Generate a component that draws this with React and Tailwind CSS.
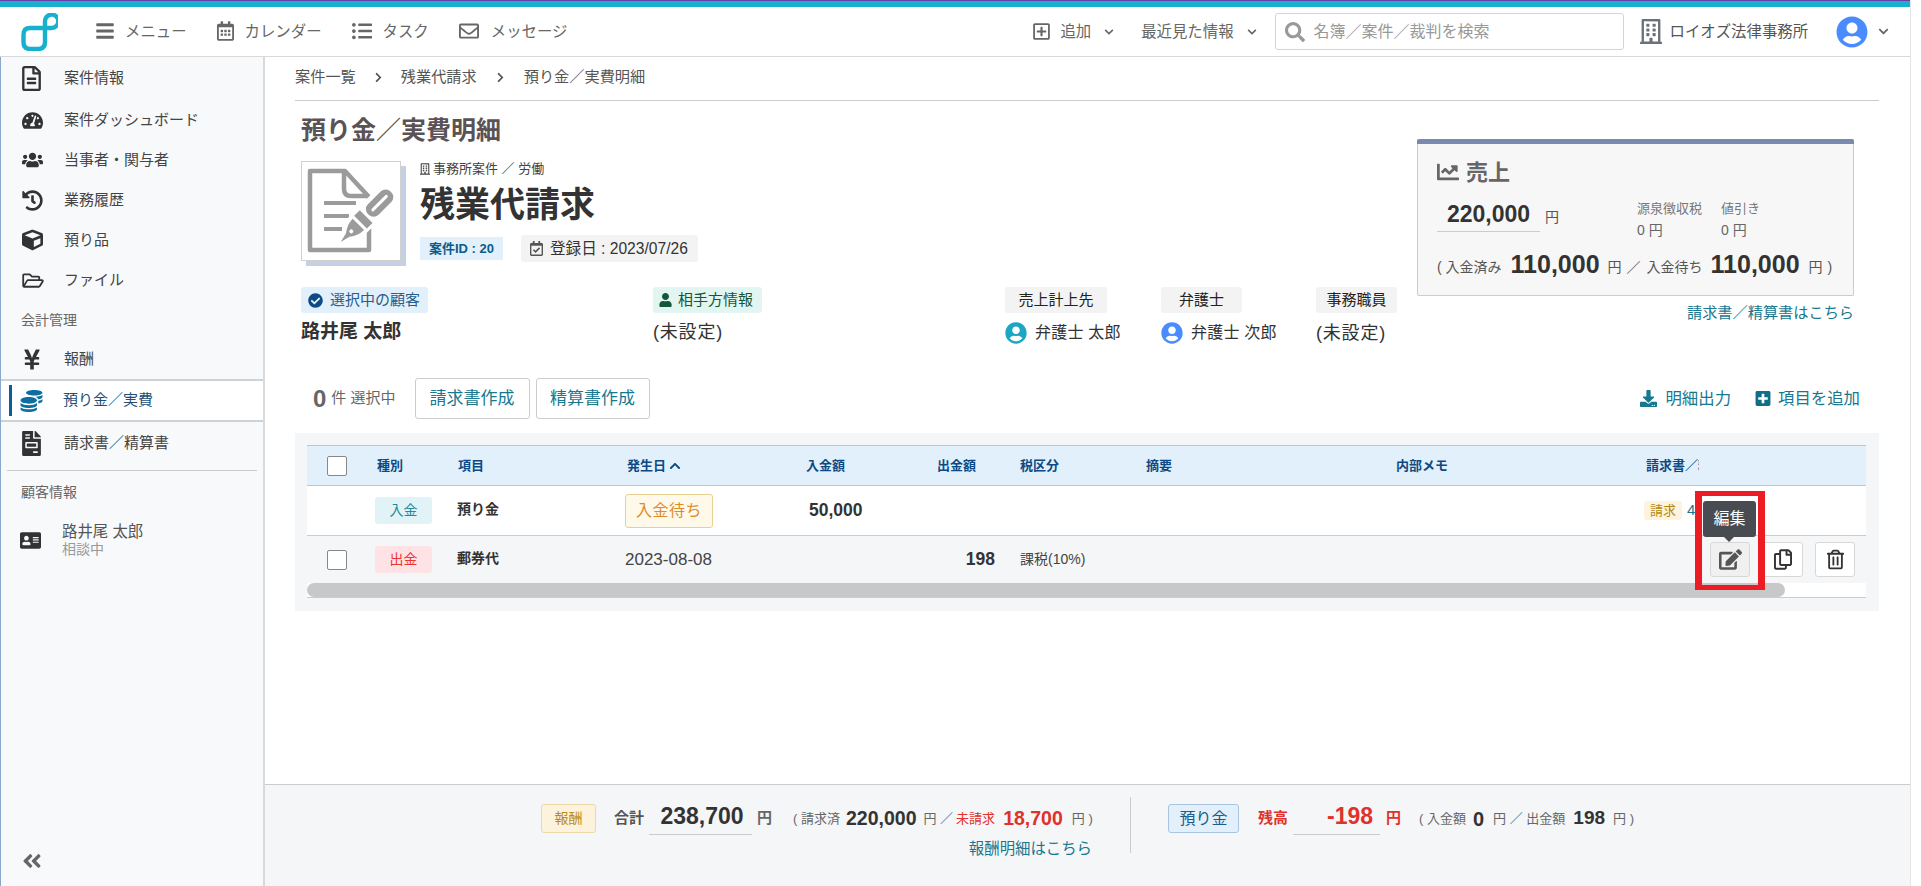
import React from "react";
import {
  FaBars, FaRegCalendarAlt, FaListUl, FaRegEnvelope, FaRegPlusSquare, FaChevronDown, FaChevronRight, FaChevronUp, FaSearch, FaRegBuilding,
  FaUserCircle, FaRegFileAlt, FaTachometerAlt, FaUsers, FaHistory, FaCube, FaRegFolderOpen, FaYenSign, FaCoins, FaFileInvoice,
  FaAddressCard, FaAngleDoubleLeft, FaChartLine, FaCheckCircle, FaUser, FaDownload, FaPlusSquare, FaEdit, FaRegCopy, FaRegTrashAlt, FaRegCalendarCheck,
} from "react-icons/fa";

function Logo() {
  return (
    <svg width="37" height="38" viewBox="0 0 37 38" fill="none" className="shrink-0">
      <path d="M24 15 H9 Q2.5 15 2.5 22 V29 Q2.5 36 9 36 H17 Q24 36 24 29 V9 A6.7 6.7 0 1 1 30.5 15 H24" stroke="#17b0cd" strokeWidth="4.4" />
    </svg>
  );
}

function CaseIcon() {
  const g = "#9b9b9b";
  return (
    <svg width="98" height="98" viewBox="0 0 98 98" fill="none">
      <path d="M8 9 H43 L67 35 V88 H8 Z" stroke={g} strokeWidth="4.5" strokeLinejoin="round" />
      <path d="M42 9 V27 Q42 34 49 34 H67" stroke={g} strokeWidth="4.5" />
      <path d="M22 41 H54 M22 54 H47 M22 67 H40" stroke={g} strokeWidth="4" />
      <g transform="translate(38.7 80) rotate(-45)">
        <path d="M2 -3 L10 -5 Q18 -10 25 -10 L72 -10 Q78 0 72 10 L25 10 Q18 10 10 5 L2 3 Z" fill="#fff" stroke="#fff" strokeWidth="4" />
        <path d="M0 0 L10 -2.5 Q17 -8 25 -8 L25 8 Q17 8 10 2.5 Z" fill={g} />
        <circle cx="15" cy="0" r="2" fill="#fff" />
        <rect x="28" y="-9" width="8" height="18" fill={g} />
        <rect x="39" y="-7.5" width="32" height="15" rx="7" fill={g} />
        <rect x="44" y="-1.5" width="22" height="3" rx="1.5" fill="#fff" />
      </g>
    </svg>
  );
}

function TopItem({ icon, label, className }) {
  return (
    <div className={"flex items-center text-[15.4px] text-[#666] shrink-0 " + className}>
      {icon}
      <span>{label}</span>
    </div>
  );
}

function SideItem({ icon, label, className = "h-[40px]" }) {
  return (
    <div className={"flex items-center pl-[21px] text-[15px] text-[#444] " + className}>
      <span className="w-[42px] shrink-0 flex items-center">{icon}</span>
      <span>{label}</span>
    </div>
  );
}

function PersonHead({ children, className }) {
  return <div className={"h-[26px] rounded-[3px] flex items-center text-[15px] " + className}>{children}</div>;
}

const teal = "text-[#17788f]";
const GRID = "grid grid-cols-[70px_81px_169px_179px_131px_83px_126px_250px_250px_1fr]";
const slot = "h-[29px] flex items-center shrink-0 ";

function Head({ children, className = "" }) {
  return <div className={"text-[13px] font-bold text-[#0d4a85] flex items-center " + className}>{children}</div>;
}

function ActionBtn({ children, className = "bg-white" }) {
  return <div className={"w-[40px] h-[35px] rounded-[3px] border border-[#d8d8d8] flex items-center justify-center text-[#333] " + className}>{children}</div>;
}

export default function App() {
  return (
    <div className="w-[1921px] h-[886px] overflow-hidden flex bg-white text-[#333] font-['Liberation_Sans','Noto_Sans_CJK_JP',sans-serif]">
      <div className="w-[1910px] h-full flex flex-col shrink-0">
        <div className="h-[1px] bg-[#6a3fa8]" />
        <div className="h-[6px] bg-[#17b0cd]" />
        <header className="h-[50px] border-b border-[#d9d9d9] flex items-center pl-[21px] shrink-0">
          <Logo />
          <TopItem className="ml-[38px]" label="メニュー" icon={<FaBars className="w-[18px] h-[20px] mr-[11px] text-[#666]" />} />
          <TopItem className="ml-[30px]" label="カレンダー" icon={<FaRegCalendarAlt className="w-[17px] h-[20px] mr-[11px] text-[#666]" />} />
          <TopItem className="ml-[30px]" label="タスク" icon={<FaListUl className="w-[20px] h-[20px] mr-[11px] text-[#666]" />} />
          <TopItem className="ml-[30px]" label="メッセージ" icon={<FaRegEnvelope className="w-[20px] h-[20px] mr-[12px] text-[#666]" />} />
          <TopItem className="ml-[466px]" label="追加" icon={<FaRegPlusSquare className="w-[17px] h-[19px] mr-[10px] text-[#666]" />} />
          <FaChevronDown className="w-[10px] h-[10px] ml-[13px] text-[#666] shrink-0" />
          <TopItem className="ml-[27px]" label="最近見た情報" icon={null} />
          <FaChevronDown className="w-[10px] h-[10px] ml-[13px] text-[#666] shrink-0" />
          <div className="ml-[18px] w-[349px] h-[37px] border border-[#d5d5d5] rounded-[3px] flex items-center pl-[9px] text-[16px] text-[#999] shrink-0">
            <FaSearch className="w-[20px] h-[20px] mr-[9px] text-[#999]" />
            <span>名簿／案件／裁判を検索</span>
          </div>
          <FaRegBuilding className="w-[22px] h-[25px] ml-[16px] text-[#6b7178] shrink-0" />
          <span className="ml-[8px] text-[15.4px] text-[#555] shrink-0">ロイオズ法律事務所</span>
          <FaUserCircle className="w-[32px] h-[32px] ml-[28px] text-[#4a8cff] shrink-0" />
          <FaChevronDown className="w-[11px] h-[11px] ml-[10px] text-[#666] shrink-0" />
        </header>
        <div className="flex-1 flex min-h-0">
          <aside className="w-[265px] shrink-0 border-l border-[#8aa8cc] border-r-2 border-r-[#d9d9d9] bg-[#f8f9fb] flex flex-col pt-[1px]">
            <SideItem label="案件情報" icon={<FaRegFileAlt className="w-[19px] h-[25px] text-[#333]" />} />
            <SideItem className="h-[40px] mt-[2px]" label="案件ダッシュボード" icon={<FaTachometerAlt className="w-[21px] h-[19px] text-[#333]" />} />
            <SideItem label="当事者・関与者" icon={<FaUsers className="w-[21px] h-[18px] text-[#333]" />} />
            <SideItem label="業務履歴" icon={<FaHistory className="w-[21px] h-[21px] text-[#333]" />} />
            <SideItem label="預り品" icon={<FaCube className="w-[21px] h-[22px] text-[#333]" />} />
            <SideItem label="ファイル" icon={<FaRegFolderOpen className="w-[22px] h-[19px] text-[#333]" />} />
            <div className="h-[40px] flex items-center pl-[20px] text-[14px] text-[#666]">会計管理</div>
            <SideItem className="h-[39px]" label="報酬" icon={<FaYenSign className="w-[20px] h-[23px] text-[#333]" />} />
            <div className="relative h-[43px] bg-white border-y-2 border-[#ccd3d8] flex items-center pl-[19px] text-[15px] text-[#234f73]">
              <div className="absolute left-[8px] top-[4px] w-[3px] h-[31px] bg-[#0a5f96]" />
              <span className="w-[43px] shrink-0"><FaCoins className="w-[23px] h-[22px] text-[#0d6ea0]" /></span>
              <span>預り金／実費</span>
            </div>
            <SideItem className="h-[42px]" label="請求書／精算書" icon={<FaFileInvoice className="w-[19px] h-[25px] text-[#333]" />} />
            <div className="mt-[6px] ml-[6px] w-[250px] h-[1px] bg-[#ccc] shrink-0" />
            <div className="h-[42px] flex items-center pl-[20px] text-[14px] text-[#666]">顧客情報</div>
            <div className="h-[54px] flex items-center pl-[19px]">
              <span className="w-[42px] shrink-0"><FaAddressCard className="w-[21px] h-[21px] text-[#333]" /></span>
              <div className="flex flex-col">
                <span className="text-[15.4px] leading-[18px] text-[#555]">路井尾 太郎</span>
                <span className="text-[14px] leading-[16px] text-[#999]">相談中</span>
              </div>
            </div>
            <div className="mt-auto pl-[20px] pb-[14px]">
              <FaAngleDoubleLeft className="w-[22px] h-[22px] text-[#666]" />
            </div>
          </aside>
          <div className="flex-1 flex flex-col min-w-0">
            <main className="flex-1 min-h-0 overflow-hidden pl-[30px] pr-[31px]">
              <nav className="h-[44px] border-b border-[#ccc] flex items-center pb-[3px] text-[15.2px] text-[#555]">
                <span>案件一覧</span>
                <FaChevronRight className="w-[9px] h-[11px] mx-[18px] text-[#555]" />
                <span>残業代請求</span>
                <FaChevronRight className="w-[9px] h-[11px] mx-[19px] text-[#555]" />
                <span>預り金／実費明細</span>
              </nav>
              <div className="flex justify-between">
                <div className="ml-[6px] w-[1115px] shrink-0">
                  <h1 className="pt-[14px] h-[44px] text-[25px] leading-[30px] font-bold text-[#5a5255]">預り金／実費明細</h1>
                  <div className="mt-[16px] flex">
                    <div className="w-[100px] h-[100px] border border-[#d0d0d0] bg-white shadow-[5px_5px_0_#c5d0e2] shrink-0">
                      <CaseIcon />
                    </div>
                    <div className="ml-[19px]">
                      <div className="h-[16px] flex items-center text-[13px] text-[#444]">
                        <FaRegBuilding className="w-[10px] h-[12px] mr-[3px] text-[#444]" />
                        <span>事務所案件 ／ 労働</span>
                      </div>
                      <div className="mt-[8px] h-[40px] flex items-center text-[35px] font-bold text-[#333]">残業代請求</div>
                      <div className="mt-[10px] flex items-center">
                        <span className="h-[23px] w-[83px] bg-[#e1f0fb] text-[#0a5c8a] text-[13px] font-bold flex items-center justify-center">案件ID : 20</span>
                        <span className="ml-[18px] h-[27px] w-[177px] bg-[#f3f3f3] rounded-[3px] flex items-center pl-[9px] text-[15.6px] text-[#333] whitespace-nowrap">
                          <FaRegCalendarCheck className="w-[13px] h-[15px] mr-[7px] text-[#555]" />
                          登録日 : 2023/07/26
                        </span>
                      </div>
                    </div>
                  </div>
                  <div className="mt-[25px] flex">
                    <div className="w-[352px] shrink-0">
                      <PersonHead className="w-[127px] bg-[#e1f0fb] text-[#2b5c8a] pl-[7px]"><FaCheckCircle className="w-[15px] h-[15px] mr-[7px] text-[#0d4a85]" />選択中の顧客</PersonHead>
                      <div className="h-[38px] flex items-center text-[19px] font-bold text-[#333]">路井尾 太郎</div>
                    </div>
                    <div className="w-[352px] shrink-0">
                      <PersonHead className="w-[109px] bg-[#e3f5f0] text-[#14573c] pl-[6px]"><FaUser className="w-[13px] h-[14px] mr-[6px] text-[#14573c]" />相手方情報</PersonHead>
                      <div className="h-[38px] flex items-center text-[18px] tracking-[0.8px] text-[#333]">(未設定)</div>
                    </div>
                    <div className="w-[156px] shrink-0">
                      <PersonHead className="w-[102px] bg-[#f3f3f3] text-[#222] justify-center">売上計上先</PersonHead>
                      <div className="h-[38px] pt-[2px] flex items-center text-[16px] tracking-[0.2px] text-[#333] whitespace-nowrap"><FaUserCircle className="w-[22px] h-[22px] mr-[8px] text-[#1aa7c4]" />弁護士 太郎</div>
                    </div>
                    <div className="w-[155px] shrink-0">
                      <PersonHead className="w-[81px] bg-[#f3f3f3] text-[#222] justify-center">弁護士</PersonHead>
                      <div className="h-[38px] pt-[2px] flex items-center text-[16px] tracking-[0.2px] text-[#333] whitespace-nowrap"><FaUserCircle className="w-[22px] h-[22px] mr-[8px] text-[#4a8cff]" />弁護士 次郎</div>
                    </div>
                    <div className="shrink-0">
                      <PersonHead className="w-[81px] bg-[#f3f3f3] text-[#222] justify-center">事務職員</PersonHead>
                      <div className="h-[38px] pt-[3px] flex items-center text-[18px] tracking-[0.8px] text-[#333]">(未設定)</div>
                    </div>
                  </div>
                </div>
                <div className="mt-[38px] mr-[25px] w-[437px] shrink-0">
                  <div className="h-[157px] border border-[#ccc] border-t-0 rounded-[2px] bg-[#f7f7f7]">
                    <div className="h-[5px] bg-[#7a8aae] -mx-[1px] rounded-t-[2px]" />
                    <div className="pl-[19px]">
                      <div className="mt-[16px] h-[24px] flex items-center text-[22px] font-semibold text-[#666]">
                        <FaChartLine className="w-[22px] h-[22px] mr-[7px] text-[#666]" />売上
                      </div>
                      <div className="mt-[13px] flex h-[43px]">
                        <div className="w-[200px] flex shrink-0">
                          <div className="w-[103px] h-[35px] border-b border-[#ccc] flex items-center justify-center text-[23px] font-bold text-[#333]">220,000</div>
                          <span className="ml-[5px] mt-[10px] text-[14px] text-[#555]">円</span>
                        </div>
                        <div className="w-[84px] text-[13px] text-[#777] shrink-0">
                          <div className="h-[23px] flex items-center">源泉徴収税</div>
                          <div className="h-[20px] flex items-center text-[14px] text-[#666]">0 円</div>
                        </div>
                        <div className="text-[13px] text-[#777]">
                          <div className="h-[23px] flex items-center">値引き</div>
                          <div className="h-[20px] flex items-center text-[14px] text-[#666]">0 円</div>
                        </div>
                      </div>
                      <div className="mt-[10px] h-[34px] flex items-center text-[14px] text-[#555] whitespace-nowrap">
                        <span>( 入金済み</span>
                        <span className="ml-[9px] text-[25px] font-bold text-[#333] relative -top-[2px]">110,000</span>
                        <span className="ml-[8px]">円</span>
                        <span className="ml-[5px]">／</span>
                        <span className="ml-[6px]">入金待ち</span>
                        <span className="ml-[8px] text-[25px] font-bold text-[#333] relative -top-[2px]">110,000</span>
                        <span className="ml-[9px]">円</span>
                        <span className="ml-[5px]">)</span>
                      </div>
                    </div>
                  </div>
                  <div className={"mt-[6px] h-[20px] text-right text-[15.2px] " + teal}>請求書／精算書はこちら</div>
                </div>
              </div>
              <div className="mt-[27px] h-[41px] flex items-center pl-[18px] pr-[19px]">
                <span className="text-[24px] font-bold text-[#666]">0</span>
                <span className="ml-[5px] text-[15px] text-[#666]">件 選択中</span>
                <div className={"ml-[19px] w-[115px] h-[41px] border border-[#ccc] rounded-[3px] flex items-center justify-center text-[17px] " + teal}>請求書作成</div>
                <div className={"ml-[6px] w-[114px] h-[41px] border border-[#ccc] rounded-[3px] flex items-center justify-center text-[17px] " + teal}>精算書作成</div>
                <div className={"ml-auto flex items-center text-[16.4px] " + teal}>
                  <FaDownload className="w-[17px] h-[17px] mr-[8px]" />明細出力
                  <FaPlusSquare className="w-[16px] h-[17px] ml-[24px] mr-[7px] text-[#0f6f88]" />項目を追加
                </div>
              </div>
              <div className="mt-[14px] bg-[#f5f6f8] pt-[12px] pb-[13px] pl-[12px] pr-[13px]">
                <div className="relative">
                  <div className={GRID + " h-[41px] bg-[#e1f0fb] border-y border-[#c0c5cc]"}>
                    <div className="flex items-center pl-[20px]"><div className="w-[20px] h-[20px] bg-white border border-[#888] rounded-[2px]" /></div>
                    <Head>種別</Head>
                    <Head>項目</Head>
                    <Head>発生日<FaChevronUp className="w-[12px] h-[12px] ml-[3px]" /></Head>
                    <Head>入金額</Head>
                    <Head>出金額</Head>
                    <Head>税区分</Head>
                    <Head>摘要</Head>
                    <Head>内部メモ</Head>
                    <Head><span className="w-[53px] overflow-hidden whitespace-nowrap">請求書／精算書</span></Head>
                  </div>
                  <div className={GRID + " h-[50px] bg-white border-b border-[#ccc]"}>
                    <div />
                    <div className="flex items-center -ml-[2px]"><span className="w-[57px] h-[27px] rounded-[3px] bg-[#e1f3f6] text-[#1d8c9c] text-[14px] flex items-center justify-center">入金</span></div>
                    <div className="flex items-center -ml-[1px] pb-[2px] text-[14px] font-bold text-[#333]">預り金</div>
                    <div className="flex items-center -ml-[2px]"><span className="w-[88px] h-[34px] rounded-[3px] border border-[#e8d090] bg-[#fff9ea] text-[#e08a2a] text-[16px] tracking-[0.5px] flex items-center justify-center">入金待ち</span></div>
                    <div className="flex items-center pl-[3px] text-[17.5px] font-bold text-[#333]">50,000</div>
                    <div />
                    <div />
                    <div />
                    <div />
                    <div className="flex items-center -ml-[2px]">
                      <span className="w-[38px] h-[19px] rounded-[3px] bg-[#fdf3df] text-[#b08a10] text-[13px] flex items-center justify-center">請求</span>
                      <span className={"ml-[5px] text-[15px] " + teal}>4</span>
                    </div>
                  </div>
                  <div className={GRID + " h-[47px] bg-[#f5f6f8]"}>
                    <div className="flex items-center pl-[20px]"><div className="w-[20px] h-[20px] bg-white border border-[#888] rounded-[2px]" /></div>
                    <div className="flex items-center -ml-[2px]"><span className="w-[57px] h-[27px] rounded-[3px] bg-[#fde3e6] text-[#e33] text-[14px] flex items-center justify-center">出金</span></div>
                    <div className="flex items-center -ml-[1px] pb-[2px] text-[14px] font-bold text-[#333]">郵券代</div>
                    <div className="flex items-center -ml-[2px] text-[17px] text-[#444]">2023-08-08</div>
                    <div />
                    <div className="flex items-center justify-end pr-[25px] text-[17.5px] font-bold text-[#333]">198</div>
                    <div className="flex items-center text-[14px] text-[#444]">課税(10%)</div>
                    <div />
                    <div />
                    <div className="flex items-center justify-end pr-[11px] gap-[12.5px]">
                      <ActionBtn className="bg-[#f0f0f0]"><FaEdit className="w-[23px] h-[21px] text-[#555]" /></ActionBtn>
                      <ActionBtn><FaRegCopy className="w-[18px] h-[21px]" /></ActionBtn>
                      <ActionBtn><FaRegTrashAlt className="w-[17px] h-[21px]" /></ActionBtn>
                    </div>
                  </div>
                  <div className="h-[15px] bg-white border-b border-[#ccc]">
                    <div className="w-[1478px] h-[14px] rounded-full bg-[#c8c8c8]" />
                  </div>
                  <div className="absolute left-[1388px] top-[46px] w-[70px] h-[99px] border-x-[7px] border-y-[5px] border-[#ed1c24] pointer-events-none" />
                  <div className="absolute left-[1396px] top-[56px] w-[53px] h-[36px] rounded-[3px] bg-[#484b52] text-white text-[16px] flex items-center justify-center">
                    編集
                    <div className="absolute left-[21px] top-[36px] w-0 h-0 border-x-[5px] border-x-transparent border-t-[5px] border-t-[#484b52]" />
                  </div>
                </div>
              </div>
            </main>
            <footer className="h-[102px] shrink-0 border-t border-[#ccc] bg-[#f5f6f8] flex items-start pl-[276px]">
              <div className="w-[551px] shrink-0 pt-[19px]">
                <div className="h-[31px] flex whitespace-nowrap items-start">
                  <span className="w-[55px] h-[29px] rounded-[3px] bg-[#fdf2dc] border border-[#ecd9a8] text-[#b88a1a] text-[14px] flex items-center justify-center shrink-0">報酬</span>
                  <span className={"ml-[18px] text-[15px] font-bold text-[#555] " + slot}>合計</span>
                  <span className="ml-[5px] w-[103px] h-[31px] border-b border-[#ccc] flex items-center justify-center pl-[3px] text-[23px] font-bold text-[#333] pb-[5px] shrink-0">238,700</span>
                  <span className={"ml-[5px] text-[15px] font-bold text-[#666] " + slot}>円</span>
                  <span className={"ml-[21px] text-[13px] text-[#666] " + slot}>( 請求済</span>
                  <span className={"ml-[6px] text-[19.5px] font-bold text-[#333] " + slot}>220,000</span>
                  <span className={"ml-[7px] text-[13px] text-[#666] " + slot}>円 ／</span>
                  <span className={"ml-[3px] text-[13px] text-[#e0312b] " + slot}>未請求</span>
                  <span className={"ml-[8px] text-[19.5px] font-bold text-[#e0312b] " + slot}>18,700</span>
                  <span className={"ml-[9px] text-[13px] text-[#666] " + slot}>円&nbsp;)</span>
                </div>
                <div className={"mt-[2px] h-[20px] text-right text-[15.4px] " + teal}>報酬明細はこちら</div>
              </div>
              <div className="ml-[38px] mt-[12px] w-[1px] h-[56px] bg-[#ccc] shrink-0" />
              <div className="ml-[37px] pt-[19px]">
                <div className="h-[31px] flex whitespace-nowrap items-start">
                  <span className="w-[71px] h-[29px] rounded-[3px] bg-[#e2f0fb] border border-[#a9c4de] text-[#1f5a8a] text-[16px] flex items-center justify-center shrink-0">預り金</span>
                  <span className={"ml-[19px] text-[15px] font-bold text-[#e0312b] " + slot}>残高</span>
                  <span className="ml-[5px] w-[87px] h-[31px] border-b border-[#ccc] flex items-center justify-end pr-[7px] pb-[5px] text-[23px] font-bold text-[#e0312b] shrink-0">-198</span>
                  <span className={"ml-[6px] text-[15px] font-bold text-[#e0312b] " + slot}>円</span>
                  <span className={"ml-[18px] text-[13px] text-[#666] " + slot}>( 入金額</span>
                  <span className={"ml-[7px] text-[20px] font-bold text-[#333] " + slot}>0</span>
                  <span className={"ml-[9px] text-[13px] text-[#666] " + slot}>円 ／ 出金額</span>
                  <span className={"ml-[8px] text-[19px] font-bold text-[#333] " + slot}>198</span>
                  <span className={"ml-[8px] text-[13px] text-[#666] " + slot}>円 )</span>
                </div>
              </div>
            </footer>
          </div>
        </div>
      </div>
      <div className="flex-1 border-l border-[#e5e5e5] bg-white" />
    </div>
  );
}
